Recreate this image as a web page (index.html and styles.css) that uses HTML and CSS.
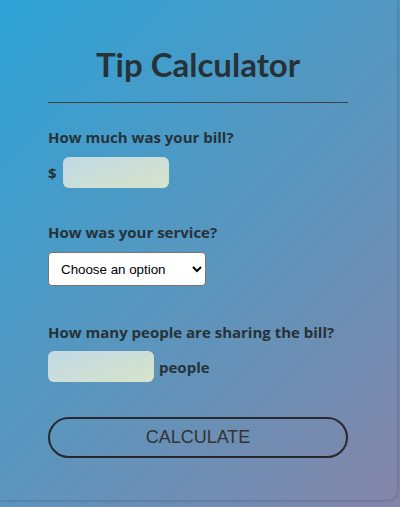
FILE: index.html
```html
<!DOCTYPE html>
<html>
<head>
<meta charset="utf-8">
<link rel="stylesheet" href="styles.css">
</head>
<body>
<div class="card">
  <h1 class="title">Tip Calculator</h1>
  <hr class="rule">
  <div class="field field-bill">
    <p class="label">How much was your bill?</p>
    <div class="row">
      <span class="unit">$</span>
      <input class="box" type="text">
    </div>
  </div>
  <div class="field field-service">
    <p class="label">How was your service?</p>
    <div class="row">
      <select class="select">
        <option>Choose an option</option>
      </select>
    </div>
  </div>
  <div class="field field-people">
    <p class="label">How many people are sharing the bill?</p>
    <div class="row row-people">
      <input class="box" type="text">
      <span class="unit">people</span>
    </div>
  </div>
  <button class="calc">CALCULATE</button>
</div>
</body>
</html>
```
FILE: styles.css
```css
html {
  background: linear-gradient(135deg, #2da3d6 0%, #5c95bd 55%, #8584a8 100%);
  min-height: 100%;
}
body {
  margin: 0;
  min-height: 507px;
  font-family: "Open Sans", Lato, sans-serif;
  color: #263238;
}
.card {
  width: 397px;
  height: 500px;
  box-sizing: border-box;
  padding: 44px 49px 0 48px;
  border-radius: 0 0 10px 0;
  background: linear-gradient(135deg, #2da3d6 0%, #5c95bd 55%, #8485a8 100%);
  box-shadow: 1px 1px 3px rgba(60, 70, 110, 0.35);
}
.title {
  margin: 0;
  text-align: center;
  font-family: Lato, "Open Sans", sans-serif;
  font-size: 33px;
  font-weight: 700;
  line-height: 40px;
  color: #263238;
}
.rule {
  margin: 18px 0 0 0;
  border: 0;
  border-top: 1px solid #3a3f48;
  height: 0;
}
.field-bill {
  margin-top: 24px;
}
.field-service {
  margin-top: 34px;
}
.field-people {
  margin-top: 36px;
}
.label {
  margin: 0;
  font-size: 15px;
  font-weight: 700;
  line-height: 20px;
  color: #263238;
}
.row {
  display: flex;
  align-items: center;
  gap: 6px;
  margin-top: 10px;
}
.row-people {
  gap: 5px;
  margin-top: 9px;
}
.unit {
  font-size: 15px;
  font-weight: 700;
  color: #263238;
}
.box {
  width: 106px;
  height: 31px;
  box-sizing: border-box;
  border: 0;
  border-radius: 6px;
  background: linear-gradient(160deg, #c2d9e6 0%, #d6e4c9 100%);
  padding: 0;
  margin: 0;
}
.select {
  width: 158px;
  height: 34px;
  box-sizing: border-box;
  border: 1px solid #767676;
  border-radius: 4px;
  background: #fff;
  font-family: Arial, "Liberation Sans", sans-serif;
  font-size: 13.33px;
  padding: 0 6px 0 8px;
  color: #000;
  margin: 0;
}
.calc {
  display: block;
  margin-top: 35px;
  width: 300px;
  height: 41px;
  border: 2px solid #25282c;
  border-radius: 21px;
  background: transparent;
  font-family: Arial, "Liberation Sans", sans-serif;
  font-size: 18px;
  color: #333;
  padding: 0;
}
```
